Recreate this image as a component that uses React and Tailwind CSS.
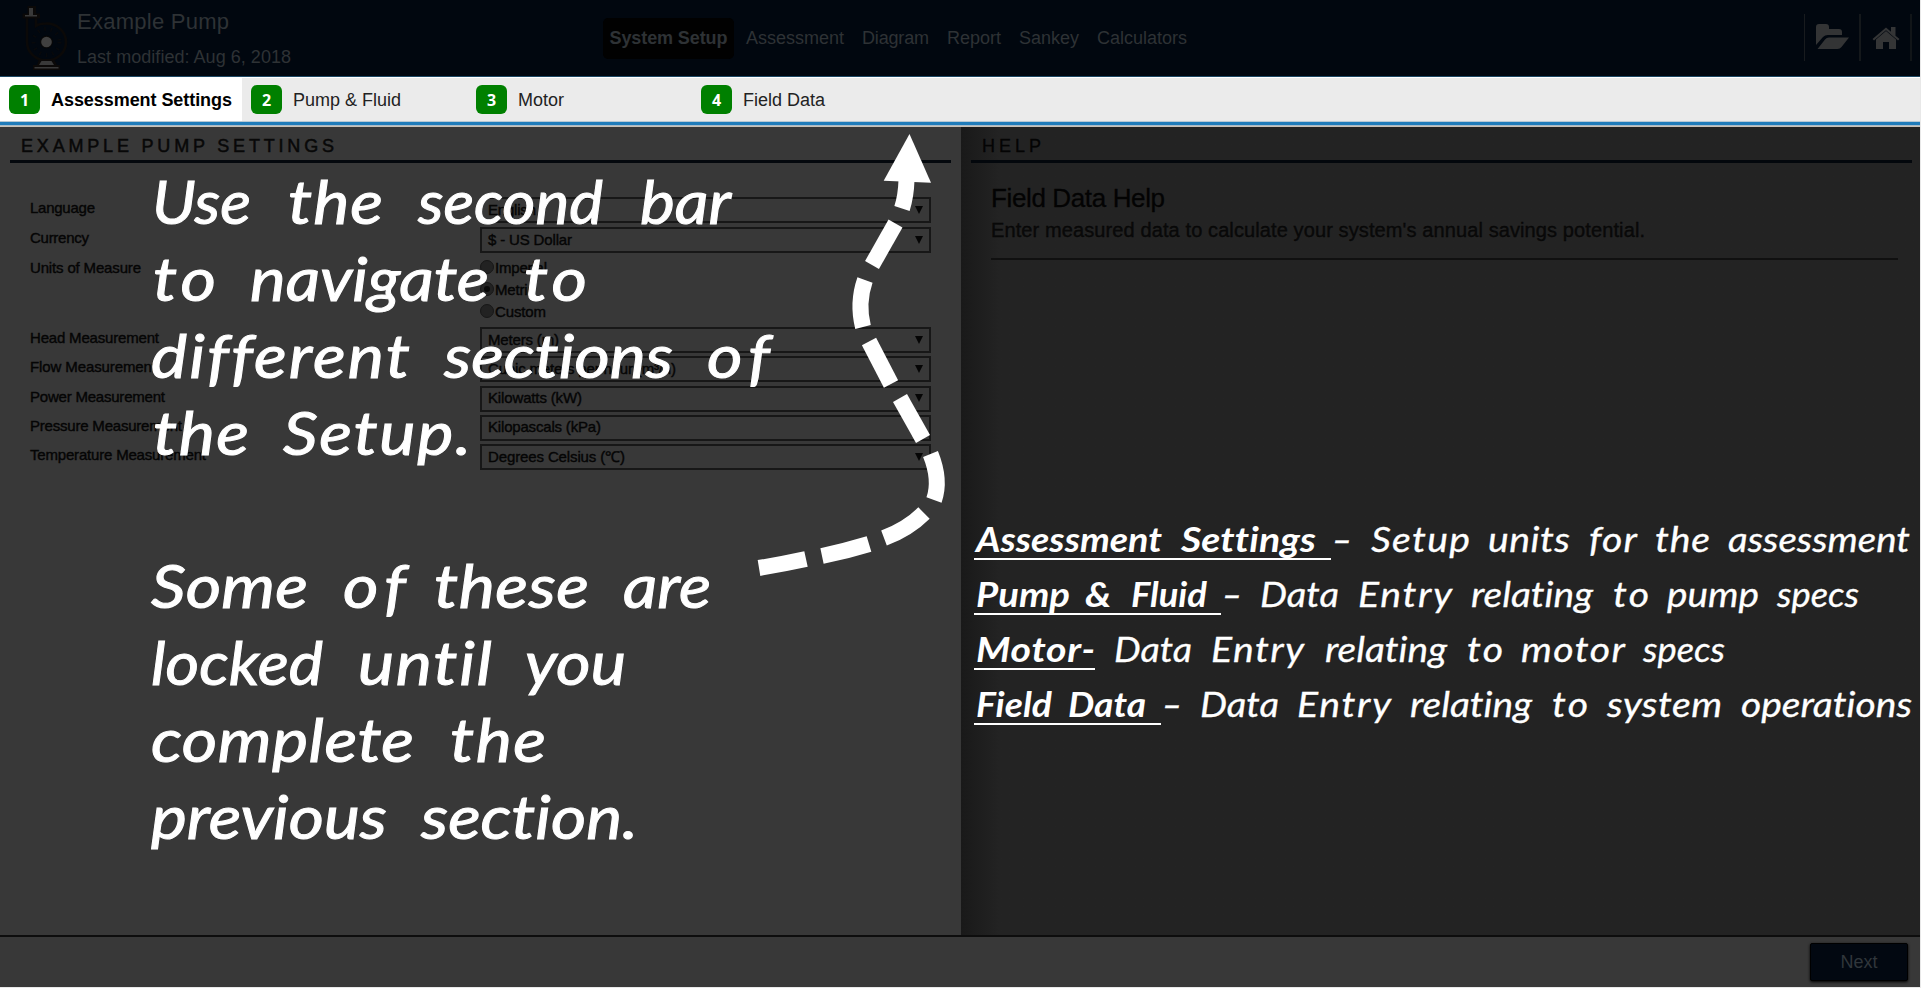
import { useLayoutEffect, useRef } from "react";

// Makes the text fill exactly `w` pixels: first by widening the glyphs up to `stretch`, then by letter spacing.
function Fit({ w, children, className = "", gap = 0, stretch = 1 }) {
  const ref = useRef(null);
  useLayoutEffect(() => {
    const el = ref.current;
    el.style.letterSpacing = "0px";
    el.style.transform = "none";
    const natural = el.getBoundingClientRect().width;
    const n = Math.max(el.textContent.length - 1, 1);
    const scale = Math.max(1, Math.min(stretch, w / natural));
    el.style.letterSpacing = (w / scale - natural) / n + "px";
    if (scale > 1) el.style.transform = "scaleX(" + scale + ")";
  }, [w, stretch]);
  return (
    <span className={"block shrink-0 " + className} style={{ width: w, marginLeft: gap }}>
      <span ref={ref} className="inline-block origin-left whitespace-pre">{children}</span>
    </span>
  );
}

const notes = [
  [["Use", 152, 251], ["the", 288, 383], ["second", 418, 603], ["bar", 640, 731]],
  [["to", 153, 216], ["navigate", 250, 489], ["to", 524, 587]],
  [["different", 151, 410], ["sections", 444, 673], ["of", 707, 770]],
  [["the", 153, 249], ["Setup.", 283, 471]],
  null,
  [["Some", 151, 308], ["of", 343, 406], ["these", 434, 589], ["are", 623, 711]],
  [["locked", 151, 323], ["until", 358, 492], ["you", 525, 626]],
  [["complete", 151, 414], ["the", 450, 546]],
  [["previous", 151, 387], ["section.", 421, 638]],
];

const legend = [
  [357, [["Assessment", 976, 1162], ["Settings", 1181, 1316]], [["-", 1332, 1352], ["Setup", 1371, 1470], ["units", 1488, 1570], ["for", 1589, 1637], ["the", 1655, 1710], ["assessment", 1728, 1910]]],
  [247, [["Pump", 976, 1070], ["&", 1085, 1112], ["Fluid", 1131, 1207]], [["-", 1222, 1242], ["Data", 1260, 1339], ["Entry", 1358, 1452], ["relating", 1471, 1593], ["to", 1613, 1649], ["pump", 1667, 1759], ["specs", 1777, 1859]]],
  [121, [["Motor-", 976, 1095]], [["Data", 1114, 1192], ["Entry", 1211, 1304], ["relating", 1325, 1447], ["to", 1467, 1503], ["motor", 1521, 1625], ["specs", 1643, 1725]]],
  [187, [["Field", 976, 1052], ["Data", 1068, 1146]], [["-", 1162, 1182], ["Data", 1200, 1279], ["Entry", 1297, 1391], ["relating", 1410, 1532], ["to", 1552, 1588], ["system", 1607, 1722], ["operations", 1741, 1912]]],
];

function Words({ words, from, className = "" }) {
  return words.map(([t, a, b], i) => (
    <Fit key={i} w={b - a} stretch={t === "-" ? 1.7 : 1.12} gap={a - (i ? words[i - 1][2] : from)} className={className}>{t}</Fit>
  ));
}

const nav = [["Assessment", 98, "ml-[12px]"], ["Diagram", 67, "ml-[18px]"], ["Report", 54, "ml-[18px]"], ["Sankey", 60, "ml-[18px]"], ["Calculators", 90, "ml-[18px]"]];

function Select({ children, w, arrow = true }) {
  return (
    <div className="flex h-[26px] w-[451px] items-center justify-between border-2 border-[#171717] pr-[6px] pb-px pl-[6px]">
      <Fit w={w}>{children}</Fit>
      {arrow && (
        <svg width="8" height="8" viewBox="0 0 8 8"><path d="M0 0h8L4 8z" fill="#050505" /></svg>
      )}
    </div>
  );
}

function Row({ label, lw, className = "", children }) {
  return (
    <div className={"flex items-start " + className}>
      <div className="w-[450px] shrink-0 pt-[2px]"><Fit w={lw}>{label}</Fit></div>
      {children}
    </div>
  );
}

function Radio({ label, w, on }) {
  return (
    <div className="flex h-[22px] items-center">
      <span className="-mt-[3px] flex size-[14px] items-center justify-center rounded-full border border-[#171717] bg-[#222222]">
        {on && <span className="size-[6px] rounded-full bg-[#080808]" />}
      </span>
      <Fit w={w} gap={1}>{label}</Fit>
    </div>
  );
}

function Tab({ n, w, children, className = "" }) {
  return (
    <div className={"flex h-full items-center " + className}>
      <span className="mr-[11px] flex h-[29px] w-[31px] items-center justify-center rounded-[6px] bg-[#008000] font-['Open_Sans',sans-serif] text-[16px] font-bold text-white">{n}</span>
      <Fit w={w} className="pt-px">{children}</Fit>
    </div>
  );
}

function PumpIcon() {
  return (
    <svg className="mt-[4px] ml-[21px] shrink-0" width="47" height="68" viewBox="21 4 47 68" fill="none">
      <path d="M27 18V42a19.500 18.500 0 1 0 19-18.500c-4 0-8 1-10 2.500V18" stroke="#0b0908" strokeWidth="2.600" />
      <path d="M22.500 13.500h5V6h8.500v7.500h4v5h-17.500z" fill="#0b0908" />
      <path d="M29 8h4v7h4v1.500H25V15h4z" fill="#393939" />
      <circle cx="46.500" cy="42" r="13" stroke="#08090b" strokeWidth="4" strokeDasharray="1.500 5" />
      <circle cx="46.500" cy="42" r="6.500" fill="#080808" />
      <circle cx="46.500" cy="42" r="5.300" fill="#404040" />
      <path d="M39 59h15l3 6h3v5H33v-5h4z" fill="#0b0908" />
      <path d="M41.500 61h10l2.500 4H39zM34.500 67h24v1.500h-24z" fill="#393939" />
    </svg>
  );
}

const dashes = [
  "M759 568Q783 564 806 559",
  "M822 556Q846 551 869 544",
  "M884 538Q908 529 924 513",
  "M934 500Q941 480 930.500 454",
  "M923 439L900 398",
  "M891 384L869 341.500",
  "M863 327Q857 303 865 280",
  "M872 265L895.500 223.500",
  "M902 208.500Q906 196 906.500 180",
];

export default function App() {
  return (
    <div className="relative flex h-[988px] w-[1921px] flex-col overflow-hidden border-r border-b border-[#e8e8e8] bg-[#383838] font-['Liberation_Sans',Arial,sans-serif]">
      <header className="flex h-[76px] shrink-0 bg-[#01070f] text-[18px] leading-[22px] text-[#2e3235]">
        <PumpIcon />
        <div className="ml-[9px] flex w-[526px] flex-col">
          <Fit w={152} className="mt-[11px] text-[22px]">Example Pump</Fit>
          <Fit w={214} className="mt-[13px]">Last modified: Aug 6, 2018</Fit>
        </div>
        <nav className="mt-[18px] flex h-[41px] items-center self-start">
          <div className="flex h-[41px] w-[131px] items-center justify-center rounded-[5px] bg-[#010101] pb-[2px] font-bold">
            <Fit w={118}>System Setup</Fit>
          </div>
          {nav.map(([t, w, m]) => <div key={t} className={"pb-[2px] " + m}><Fit w={w}>{t}</Fit></div>)}
        </nav>
        <div className="mt-[14px] mr-[8px] ml-auto flex h-[47px] items-center">
          <span className="h-full w-px bg-[#181b1e]" />
          <svg className="mx-[10px] -mt-[2px]" width="34" height="26" viewBox="0 0 34 26" fill="#333435">
            <path d="M1 21V3a3 3 0 0 1 3-3h7a3 3 0 0 1 3 3v2h10a3 3 0 0 1 3 3v3H13a7 7 0 0 0-5 2z" />
            <path d="M2.500 25L10 15.500a5 5 0 0 1 4-2h20L26.500 23a5 5 0 0 1-4 2z" />
          </svg>
          <span className="h-full w-[2px] bg-[#14181b]" />
          <svg className="mr-[9px] ml-[10px]" width="30" height="24" viewBox="0 0 30 24" fill="#343536">
            <path d="M15 5L25 13.500V23H18v-7h-6v7H5V13.500z" />
            <path d="M1.500 13L15 1.500l5 4.300V1h4.500v8.700L28.500 13 27 14.500 15 4.300 3 14.500z" />
          </svg>
          <span className="h-full w-[2px] bg-[#111518]" />
        </div>
      </header>

      <div className="flex h-[51px] shrink-0 border-t border-[#1d4864] text-[18px] text-[#222]">
        <div className="flex h-[50px] w-full flex-col">
          <div className="h-px shrink-0 bg-white" />
          <div className="flex h-[43px] shrink-0 bg-[#ebebeb]">
            <Tab n="1" w={181} className="w-[242px] bg-white pl-[9px] font-bold text-black">Assessment Settings</Tab>
            <Tab n="2" w={108} className="w-[225px] pl-[9px]">Pump &amp; Fluid</Tab>
            <Tab n="3" w={46} className="w-[225px] pl-[9px]">Motor</Tab>
            <Tab n="4" w={82} className="w-[225px] pl-[9px]">Field Data</Tab>
          </div>
          <div className="h-px shrink-0 bg-[#b9c9d4]" />
          <div className="h-[3px] shrink-0 bg-[#207cba]" />
          <div className="h-px shrink-0 bg-[#a9bbc8]" />
          <div className="h-px shrink-0 bg-[#c9c2b8]" />
        </div>
      </div>

      <main className="flex h-[808px] shrink-0">
        <section className="w-[961px] shrink-0 px-[10px] text-[#050505]">
          <div className="h-[36px] border-b-[3px] border-[#04080d] pt-[8px] pl-[11px] text-[18px] leading-[22px] text-[#080808] [-webkit-text-stroke:0.5px_#080808]">
            <Fit w={313}>EXAMPLE PUMP SETTINGS</Fit>
          </div>
          <div className="flex flex-col pt-[34px] pl-[20px] text-[15px] leading-[18px] [-webkit-text-stroke:0.4px_#050505]">
            <Row label="Language" lw={65} className="h-[30px]"><Select w={48}>English</Select></Row>
            <Row label="Currency" lw={59} className="h-[30px]"><Select w={84}>$ - US Dollar</Select></Row>
            <Row label="Units of Measure" lw={111} className="h-[70px]">
              <div>
                <Radio label="Imperial" w={52} />
                <Radio label="Metric" w={40} on />
                <Radio label="Custom" w={51} />
              </div>
            </Row>
            <Row label="Head Measurement" lw={129} className="h-[29.300px]"><Select w={71}>Meters (m)</Select></Row>
            <Row label="Flow Measurement" lw={126} className="h-[29.300px]"><Select w={188}>Cubic meters per hour (m³/h)</Select></Row>
            <Row label="Power Measurement" lw={135} className="h-[29.300px]"><Select w={94}>Kilowatts (kW)</Select></Row>
            <Row label="Pressure Measurement" lw={152} className="h-[29.300px]"><Select w={113} arrow={false}>Kilopascals (kPa)</Select></Row>
            <Row label="Temperature Measurement" lw={176} className="h-[29.300px]"><Select w={137}>Degrees Celsius (℃)</Select></Row>
          </div>
        </section>
        <section className="w-[959px] bg-[#232323] bg-linear-to-r from-[#191919] to-[#232323] to-[38px] pr-[8px] pl-[10px]">
          <div className="h-[36px] border-b-[3px] border-[#03070c] pt-[8px] pl-[11px] text-[18px] leading-[22px] text-[#040404] [-webkit-text-stroke:0.3px_#040404]">
            <Fit w={59}>HELP</Fit>
          </div>
          <div className="mr-[14px] ml-[20px] h-[97px] border-b-2 border-[#101010] pt-[20px] text-[#030303] [-webkit-text-stroke:0.3px_#030303]">
            <Fit w={174} className="text-[26px] leading-[30px]">Field Data Help</Fit>
            <Fit w={654} className="mt-[5px] text-[20px] leading-[24px] text-[#0a0a0a]">Enter measured data to calculate your system's annual savings potential.</Fit>
          </div>
        </section>
      </main>

      <footer className="flex h-[52px] shrink-0 items-start justify-end border-t-2 border-[#0d0d0d] pt-[6px] pr-[12px] text-[18px] text-[#30363b]">
        <button className="flex h-[38px] w-[98px] items-center justify-center rounded-[2px] border border-black bg-[#020811] shadow-[0_1px_3px_#000]">
          <Fit w={37}>Next</Fit>
        </button>
      </footer>

      <div className="absolute top-0 left-[1920px] h-[57px] w-px bg-[#c0391b]" />

      <div className="pointer-events-none absolute top-[162px] left-[150px] flex flex-col font-[Lato,'Open_Sans',sans-serif] text-[61px] leading-[77px] font-normal text-white italic [font-variant-ligatures:none] [-webkit-text-stroke:1px_white]">
        {notes.map((l, i) => l
          ? <div key={i} className="flex h-[77px]"><Words words={l} from={150} /></div>
          : <div key={i} className="h-[76px]" />)}
      </div>

      <div className="pointer-events-none absolute top-[511px] left-[974px] flex flex-col font-[Lato,'Open_Sans',sans-serif] text-[35px] leading-[55px] text-white italic [font-variant-ligatures:none]">
        {legend.map(([u, head, body], i) => (
          <div key={i} className="flex h-[55px]">
            <div className="flex h-[49px] shrink-0 border-b-2 border-white font-bold" style={{ width: u }}>
              <Words words={head} from={974} />
            </div>
            <div className="flex [-webkit-text-stroke:0.3px_white]">
              <Words words={body} from={974 + u} />
            </div>
          </div>
        ))}
      </div>

      <svg className="pointer-events-none absolute top-[127px] left-[750px]" width="205" height="460" viewBox="750 127 205 460" fill="none">
        <path d="M909.500 134L883.700 180.700L931 182.700Z" fill="#fff" />
        {dashes.map((d) => <path key={d} d={d} stroke="#fff" strokeWidth="16" />)}
      </svg>
    </div>
  );
}
